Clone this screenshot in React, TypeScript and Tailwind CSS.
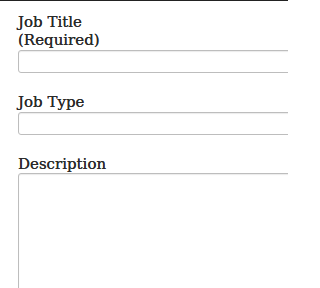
import React from "react";

const inputCls =
  "mt-[1px] w-[300px] h-[23px] border border-[#bdbdbd] rounded-[3px] bg-white shadow-[inset_0_1px_1px_rgba(0,0,0,0.08)]";

export default function App() {
  return (
    <div
      className="w-[288px] h-[288px] overflow-hidden bg-white border-t border-[#222] text-[#2a2a2a]"
      style={{ fontFamily: '"DejaVu Serif", serif' }}
    >
      <form className="pl-[18px] pt-[12px] flex flex-col">
        {/* Job Title */}
        <label className="block text-[15px] leading-[18px] [text-shadow:0_0_0.5px_#2a2a2a]">
          Job Title
          <br />
          (Required)
        </label>
        <input type="text" className={inputCls} />

        {/* Job Type */}
        <label className="block mt-[20px] text-[15px] leading-[18px] [text-shadow:0_0_0.5px_#2a2a2a]">
          Job Type
        </label>
        <input type="text" className={inputCls} />

        {/* Description */}
        <label className="block mt-[20px] text-[15px] leading-[18px] [text-shadow:0_0_0.5px_#2a2a2a]">
          Description
        </label>
        <textarea className="w-[300px] h-[160px] border border-[#bdbdbd] rounded-[3px] bg-white resize-none shadow-[inset_0_1px_1px_rgba(0,0,0,0.08)]" />
      </form>
    </div>
  );
}
